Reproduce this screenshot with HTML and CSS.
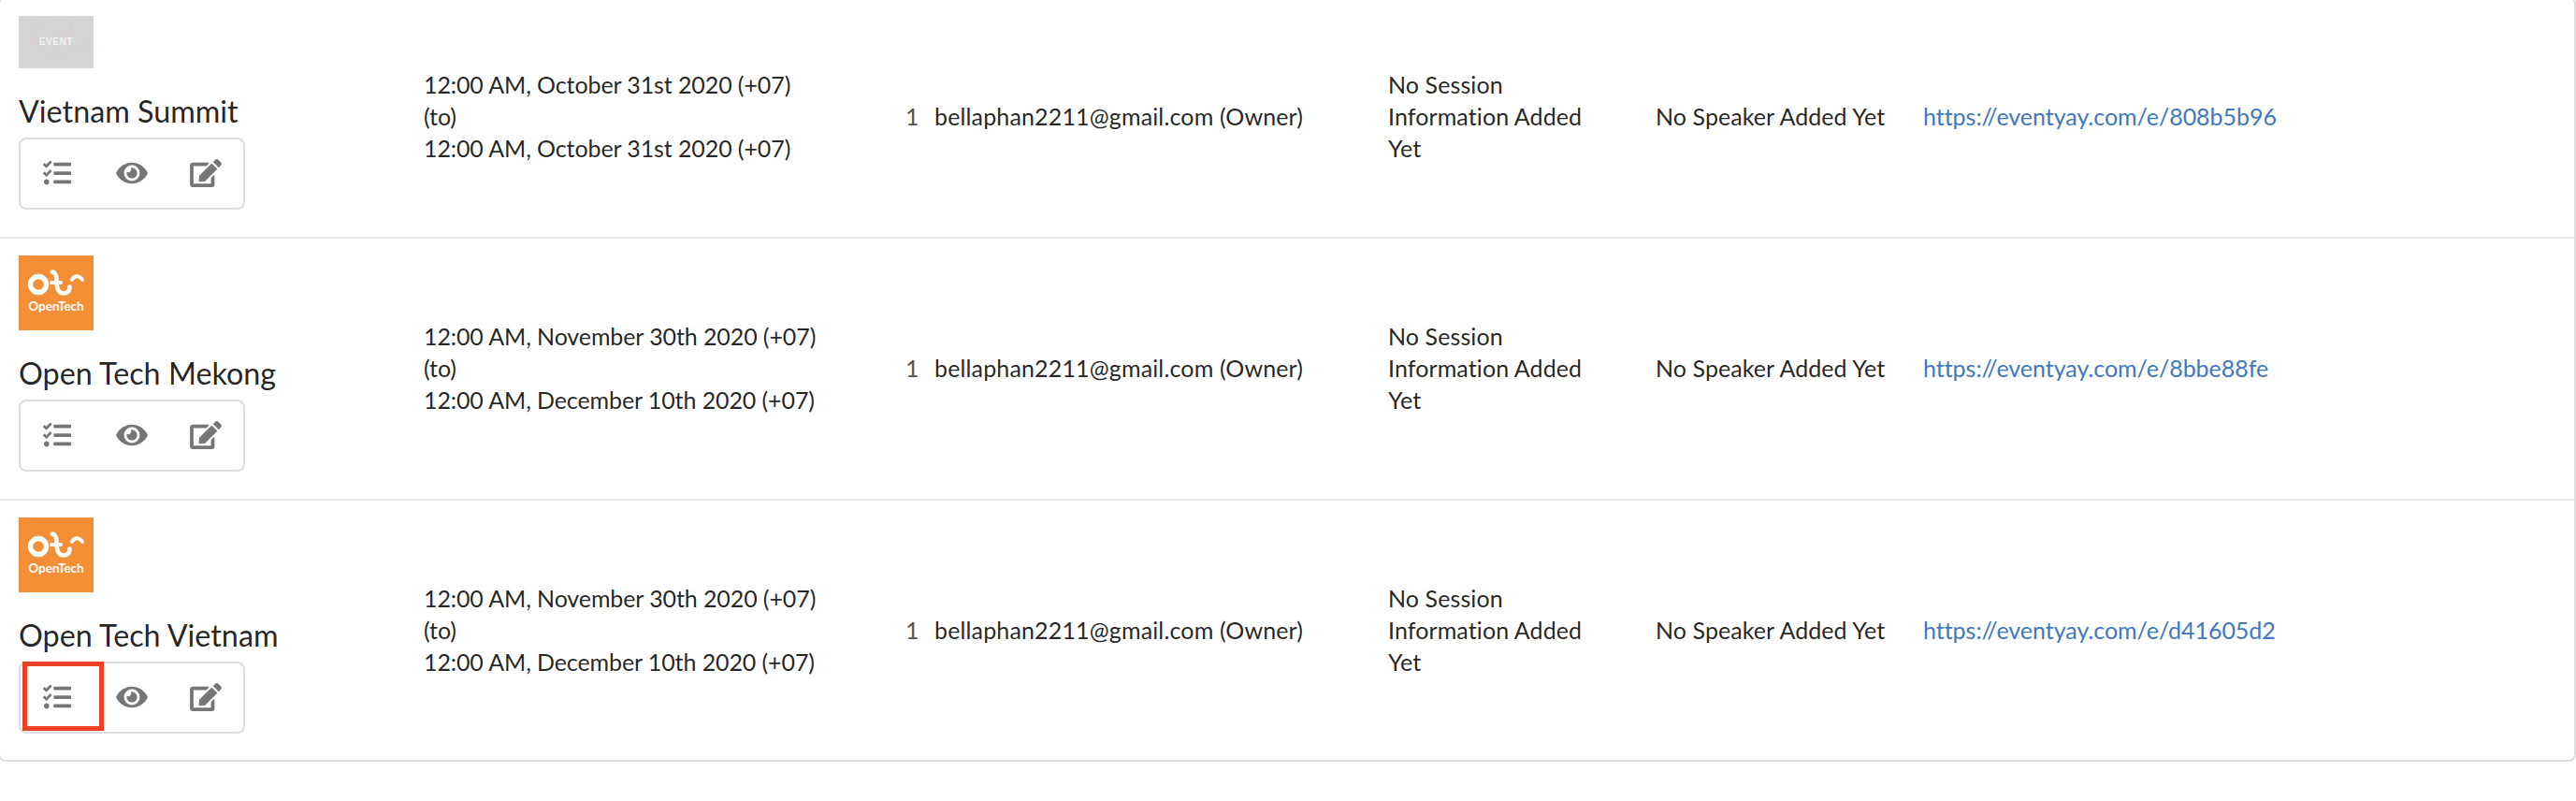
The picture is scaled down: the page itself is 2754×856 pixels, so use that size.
FILE: index.html
```html
<!DOCTYPE html>
<html lang="en">
<head>
<meta charset="utf-8">
<title>Events</title>
<link rel="stylesheet" href="styles.css">
</head>
<body>
<svg class="defs" width="0" height="0" aria-hidden="true">
  <symbol id="i-tasks" viewBox="0 0 512 512"><path d="M139.61 35.5a12 12 0 0 0-17 0L58.93 98.81l-22.7-22.12a12 12 0 0 0-17 0L3.53 92.41a12 12 0 0 0 0 17l47.59 47.4a12.78 12.78 0 0 0 17.61 0l15.59-15.62L156.52 69a12.09 12.09 0 0 0 .09-17zm0 159.19a12 12 0 0 0-17 0l-63.68 63.72-22.7-22.1a12 12 0 0 0-17 0L3.53 252a12 12 0 0 0 0 17L51 316.5a12.77 12.77 0 0 0 17.6 0l15.7-15.69 72.2-72.22a12 12 0 0 0 .09-16.9zM64 368c-26.49 0-48.59 21.5-48.59 48S37.53 464 64 464a48 48 0 0 0 0-96zm432 16H208a16 16 0 0 0-16 16v32a16 16 0 0 0 16 16h288a16 16 0 0 0 16-16v-32a16 16 0 0 0-16-16zm0-320H208a16 16 0 0 0-16 16v32a16 16 0 0 0 16 16h288a16 16 0 0 0 16-16V80a16 16 0 0 0-16-16zm0 160H208a16 16 0 0 0-16 16v32a16 16 0 0 0 16 16h288a16 16 0 0 0 16-16v-32a16 16 0 0 0-16-16z"/></symbol>
  <symbol id="i-eye" viewBox="0 0 576 512"><path d="M572.52 241.4C518.29 135.59 410.93 64 288 64S57.68 135.64 3.48 241.41a32.35 32.35 0 0 0 0 29.19C57.71 376.41 165.07 448 288 448s230.32-71.64 284.52-177.41a32.35 32.35 0 0 0 0-29.19zM288 400a144 144 0 1 1 144-144 143.93 143.93 0 0 1-144 144zm0-240a95.31 95.31 0 0 0-25.31 3.79 47.85 47.85 0 0 1-66.9 66.9A95.78 95.78 0 1 0 288 160z"/></symbol>
  <symbol id="i-edit" viewBox="0 0 576 512"><path d="M402.6 83.2l90.2 90.2c3.8 3.8 3.8 10 0 13.8L274.4 405.6l-92.8 10.3c-12.4 1.4-22.9-9.1-21.5-21.5l10.3-92.8L388.8 83.2c3.8-3.8 10-3.8 13.8 0zm162-22.9l-48.8-48.8c-15.2-15.2-39.9-15.2-55.2 0l-35.4 35.4c-3.8 3.8-3.8 10 0 13.8l90.2 90.2c3.8 3.8 10 3.8 13.8 0l35.4-35.4c15.2-15.3 15.2-40 0-55.2zM384 346.2V448H64V128h229.8c3.2 0 6.2-1.3 8.5-3.5l40-40c7.6-7.6 2.2-20.5-8.5-20.5H48C21.5 64 0 85.5 0 112v352c0 26.5 21.5 48 48 48h352c26.5 0 48-21.5 48-48V306.2c0-10.7-12.9-16-20.5-8.5l-40 40c-2.2 2.3-3.5 5.3-3.5 8.5z"/></symbol>
  <symbol id="i-otmark" viewBox="0 0 60 30"><g fill="none" stroke="#fff" stroke-linecap="round"><circle cx="11" cy="16" r="8.500" stroke-width="5.400"/><path d="M26 2.500c3.500 1 4.500 4 4.500 9 0 8 2 14 7 14s7-3 7-7" stroke-width="4.600"/><path d="M25 14h10" stroke-width="4"/><path d="M47 11c2-5 8-5 11 0" stroke-width="3.800"/></g></symbol>
</svg>

<main class="card">
<table class="events">
  <colgroup>
    <col class="c-name"><col class="c-date"><col class="c-roles"><col class="c-sessions"><col class="c-speakers"><col class="c-url">
  </colgroup>
  <tbody>
    <tr class="first">
      <td class="name">
        <div class="thumb placeholder">
          <svg class="mesh" viewBox="0 0 80 56" aria-hidden="true"><path d="M22 0L12 28l22 14 24-24L52 0M12 28L34 0M58 18l22 16M34 42l46-8M58 18l-46 10" fill="none" stroke="#e2c8c8" stroke-width=".6"/></svg>
          <span class="event-word">EVENT</span>
        </div>
        <h3 class="title">Vietnam Summit</h3>
        <div class="actions">
          <a class="act"><svg class="ic"><use href="#i-tasks"/></svg></a>
          <a class="act"><svg class="ic wide"><use href="#i-eye"/></svg></a>
          <a class="act"><svg class="ic wide"><use href="#i-edit"/></svg></a>
        </div>
      </td>
      <td class="date">12:00 AM, October 31st 2020 (+07)<br>(to)<br>12:00 AM, October 31st 2020 (+07)</td>
      <td class="roles"><span class="count">1</span>bellaphan2211@gmail.com (Owner)</td>
      <td class="sessions">No Session Information Added Yet</td>
      <td class="speakers">No Speaker Added Yet</td>
      <td class="url"><a class="link" href="#">https://eventyay.com/e/808b5b96</a></td>
    </tr>
    <tr>
      <td class="name">
        <div class="thumb logo">
          <svg class="otmark"><use href="#i-otmark"/></svg>
          <span class="ot-word">OpenTech</span>
        </div>
        <h3 class="title">Open Tech Mekong</h3>
        <div class="actions">
          <a class="act"><svg class="ic"><use href="#i-tasks"/></svg></a>
          <a class="act"><svg class="ic wide"><use href="#i-eye"/></svg></a>
          <a class="act"><svg class="ic wide"><use href="#i-edit"/></svg></a>
        </div>
      </td>
      <td class="date">12:00 AM, November 30th 2020 (+07)<br>(to)<br>12:00 AM, December 10th 2020 (+07)</td>
      <td class="roles"><span class="count">1</span>bellaphan2211@gmail.com (Owner)</td>
      <td class="sessions">No Session Information Added Yet</td>
      <td class="speakers">No Speaker Added Yet</td>
      <td class="url"><a class="link" href="#">https://eventyay.com/e/8bbe88fe</a></td>
    </tr>
    <tr>
      <td class="name">
        <div class="thumb logo">
          <svg class="otmark"><use href="#i-otmark"/></svg>
          <span class="ot-word">OpenTech</span>
        </div>
        <h3 class="title">Open Tech Vietnam</h3>
        <div class="actions">
          <a class="act"><svg class="ic"><use href="#i-tasks"/></svg></a>
          <a class="act"><svg class="ic wide"><use href="#i-eye"/></svg></a>
          <a class="act"><svg class="ic wide"><use href="#i-edit"/></svg></a>
          <span class="highlight"></span>
        </div>
      </td>
      <td class="date">12:00 AM, November 30th 2020 (+07)<br>(to)<br>12:00 AM, December 10th 2020 (+07)</td>
      <td class="roles"><span class="count">1</span>bellaphan2211@gmail.com (Owner)</td>
      <td class="sessions">No Session Information Added Yet</td>
      <td class="speakers">No Speaker Added Yet</td>
      <td class="url"><a class="link" href="#">https://eventyay.com/e/d41605d2</a></td>
    </tr>
  </tbody>
</table>
</main>
</body>
</html>
```
FILE: styles.css
```css
html, body { margin: 0; padding: 0; background: #fff; overflow: hidden; }
body { font-family: "Lato", "Liberation Sans", sans-serif; color: rgba(0,0,0,.87); font-size: 25px; line-height: 34px; }
.defs { position: absolute; }
.card {
  box-sizing: border-box;
  width: 2756px;
  height: 818px;
  margin: -4px 0 0 -2px;
  border: 2px solid #ddd;
  border-radius: 8px;
  overflow: hidden;
}
.events { width: 100%; border-collapse: collapse; table-layout: fixed; }
.c-name { width: 433px; }
.c-date { width: 516px; }
.c-roles { width: 515px; }
.c-sessions { width: 286px; }
.c-speakers { width: 286px; }
tr { height: 280px; }
tr.first { height: 256px; }
tr + tr td { border-top: 2px solid #e8e8e8; }
td { padding: 0 20px 3px; vertical-align: middle; box-sizing: border-box; }
td.date { letter-spacing: -.1px; }
td.roles { letter-spacing: .15px; }
td.sessions { padding-right: 30px; letter-spacing: .1px; }
td.speakers { letter-spacing: .08px; }
td.url { letter-spacing: -.03px; }
td.name { padding-top: 18px; padding-bottom: 0; vertical-align: top; }
.first td.name { padding-top: 19px; }
.thumb { width: 80px; position: relative; overflow: hidden; }
.placeholder { height: 56px; background: #d5d5d5; display: flex; align-items: center; justify-content: center; }
.mesh { position: absolute; inset: 0; width: 80px; height: 56px; }
.event-word { position: relative; color: #f2f2f2; font: 700 10px/1 "Liberation Sans", sans-serif; letter-spacing: .6px; }
.logo { height: 80px; background: #f28f37; display: flex; flex-direction: column; align-items: center; padding-top: 15px; box-sizing: border-box; }
.otmark { width: 60px; height: 30px; display: block; }
.ot-word { color: #fff; font: 700 13.5px/14px "Lato", sans-serif; margin-top: 2px; }
.title { margin: 26px 0 8px; font-size: 32.3px; line-height: 40px; font-weight: 400; color: rgba(0,0,0,.87); white-space: nowrap; }
.actions { position: relative; box-sizing: border-box; width: 242px; height: 77px; border: 2px solid #ddd; border-radius: 8px; display: flex; padding: 0 2px; }
.act { width: 78px; display: flex; align-items: center; justify-content: center; padding-bottom: 2px; }
.act:first-child { padding-right: 4px; box-sizing: border-box; }
.act:nth-child(3) { padding-left: 2px; box-sizing: border-box; }
.ic { width: 30px; height: 30px; fill: #767676; }
.ic.wide { width: 34px; }
.highlight { position: absolute; left: 2px; top: -2px; box-sizing: border-box; width: 87px; height: 74px; border: 5px solid #ee4123; }
.count { display: inline-block; width: 31px; margin-left: -1px; color: rgba(0,0,0,.7); }
.link { color: #4078c0; text-decoration: none; white-space: nowrap; }
```
